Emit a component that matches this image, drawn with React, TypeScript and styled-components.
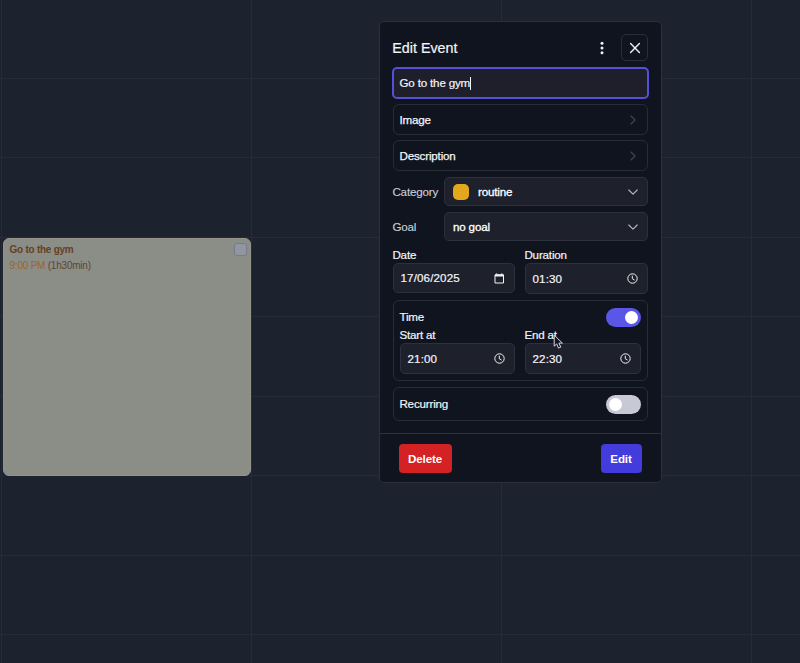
import React from "react";
import styled, { createGlobalStyle, css } from "styled-components";

const GlobalStyle = createGlobalStyle`
  * { box-sizing: border-box; }
  body { margin: 0; background: #1c222e; overflow: hidden; }
`;

const Page = styled.main`
  position: relative;
  width: 800px;
  height: 663px;
  overflow: hidden;
  background: #1c222e;
  color: #f3f4f8;
  font: 11.6px/14px "Liberation Sans", Arial, sans-serif;
  letter-spacing: -0.17px;
`;

const Calendar = styled.div`
  display: grid;
  width: 1002px;
  grid-template-columns: 2px repeat(4, 250px);
  grid-template-rows: 79px 79px 80px 79px 80px 79px 80px 79px 79px;
`;

const Slot = styled.div`
  border-right: 1px solid #252b38;
  border-bottom: 1px solid #252b38;
`;

const EventCard = styled.article`
  position: absolute;
  left: 3px;
  top: 238px;
  width: 248px;
  height: 238px;
  padding: 4px 4px 0 5.5px;
  border: 1px solid #96938a;
  border-radius: 6px;
  background: #8b8d87;
  color: #65401f;
  font-size: 10px;
  line-height: 16px;
`;

const CardHead = styled.div`
  display: flex;
  justify-content: space-between;
  height: 14px;
  line-height: 13px;
  letter-spacing: -0.25px;
`;

const CheckBox = styled.span`
  width: 13px;
  height: 13px;
  margin-right: -1px;
  border: 1px solid #777b91;
  border-radius: 3px;
  background: #9296a1;
`;

const EventTime = styled.div`
  padding-top: 1px;
  color: #5c4632;
  letter-spacing: -0.22px;
  span { color: #9c671f; }
`;

const Dialog = styled.section`
  position: absolute;
  left: 379px;
  top: 21px;
  width: 283px;
  height: 462px;
  display: flex;
  flex-direction: column;
  border: 1px solid #2a303c;
  border-radius: 5px;
  background: #0f141f;
`;

const DialogBody = styled.div`
  display: flex;
  flex-direction: column;
  gap: 6px;
  height: 412px;
  padding: 12px 13px 0;
  border-bottom: 1px solid #2a303c;
`;

const Header = styled.header`
  display: flex;
  align-items: center;
  height: 28px;
`;

const Title = styled.h1`
  flex: 1;
  margin: -1px 0 0 -0.7px;
  font-size: 14.3px;
  font-weight: 400;
  line-height: 20px;
  letter-spacing: 0;
  -webkit-text-stroke: 0.2px currentColor;
`;

const IconButton = styled.button<{ $framed?: boolean }>`
  display: grid;
  place-items: center;
  width: ${(p) => (p.$framed ? 27 : 26)}px;
  height: ${(p) => (p.$framed ? 27 : 28)}px;
  margin: ${(p) => (p.$framed ? "-1px 0 0 0" : "0 6px 0 0")};
  padding: 0;
  border: ${(p) => (p.$framed ? "1px solid #2a2f3b" : "0")};
  border-radius: 5px;
  background: transparent;
  color: #f0f1f6;
`;

const NameField = styled.div`
  display: flex;
  align-items: center;
  height: 32px;
  margin: -1px -1px 0;
  padding-left: 5.5px;
  border: 2px solid #5550d8;
  border-radius: 5px;
  background: #1e1f2a;
  -webkit-text-stroke: 0.2px currentColor;
`;

const Caret = styled.span`
  width: 1px;
  height: 13px;
  background: #f3f4f8;
`;

const panel = css`
  border: 1px solid #272c37;
  border-radius: 6px;
`;

const ExpandRow = styled.div`
  ${panel}
  display: flex;
  align-items: center;
  justify-content: space-between;
  height: 31px;
  margin-top: -1px;
  padding: 0 9px 0 5.5px;
  -webkit-text-stroke: 0.25px currentColor;
  svg { color: #3f444f; }
`;

const SelectRow = styled.div`
  display: grid;
  grid-template-columns: 51px 204px;
  align-items: center;
  height: 29px;
  color: #c9cdd8;
`;

const SelectLabel = styled.span`
  margin-left: -0.6px;
  -webkit-text-stroke: 0.15px currentColor;
`;

const Select = styled.div`
  ${panel}
  display: flex;
  align-items: center;
  height: 29px;
  padding: 0 9px 0 8px;
  border-color: #2c313d;
  border-radius: 5px;
  background: #1e202b;
  color: #fff;
  -webkit-text-stroke: 0.3px currentColor;
  svg { margin-left: auto; color: #b3b6bf; }
`;

const Swatch = styled.span`
  width: 16px;
  height: 16px;
  margin-right: 9px;
  border-radius: 5px;
  background: #e3a61c;
`;

const Pair = styled.div<{ $inner?: boolean }>`
  display: grid;
  grid-template-columns: ${(p) => (p.$inner ? "115px 116px" : "122px 123px")};
  column-gap: 10px;
  align-items: start;
  margin-top: 1px;
`;

const Field = styled.label`
  display: flex;
  flex-direction: column;
  gap: 1px;
  -webkit-text-stroke: 0.2px currentColor;
`;

const FieldName = styled.span`
  margin-left: -0.6px;
`;

const Input = styled.div<{ $short?: boolean }>`
  ${panel}
  display: flex;
  align-items: center;
  justify-content: space-between;
  height: ${(p) => (p.$short ? 30 : 31)}px;
  padding: 0 9px 0 6.5px;
  border-color: #2c313d;
  border-radius: 5px;
  background: #1e202b;
  letter-spacing: 0.13px;
`;

const TimePanel = styled.div`
  ${panel}
  height: 81px;
  padding: 6px;
`;

const ToggleRow = styled.div`
  display: flex;
  align-items: center;
  justify-content: space-between;
  height: 20px;
  -webkit-text-stroke: 0.2px currentColor;
`;

const RecurringPanel = styled.div`
  ${panel}
  height: 34px;
  padding: 6px;
`;

const Toggle = styled.span<{ $on?: boolean }>`
  display: flex;
  align-items: center;
  justify-content: ${(p) => (p.$on ? "flex-end" : "flex-start")};
  width: 35px;
  height: 19px;
  padding: 0 3px;
  border-radius: 10px;
  background: ${(p) => (p.$on ? "#5956e8" : "#c8c9d5")};
`;

const Knob = styled.span`
  width: 13px;
  height: 13px;
  border-radius: 50%;
  background: #fff;
`;

const Footer = styled.footer`
  display: flex;
  justify-content: space-between;
  align-items: center;
  height: 48px;
  padding: 0 19px;
`;

const Action = styled.button<{ $danger?: boolean }>`
  width: ${(p) => (p.$danger ? 53 : 41)}px;
  height: 29px;
  padding: 0 1px 0 0;
  border: 0;
  border-radius: 4px;
  background: ${(p) => (p.$danger ? "#d42123" : "#443bdc")};
  color: #fff;
  font: bold 11.6px "Liberation Sans", Arial, sans-serif;
  letter-spacing: -0.15px;
`;

const Pointer = styled.svg`
  position: absolute;
  left: 552px;
  top: 334px;
`;

const Chevron = ({ down }: { down?: boolean }) => (
  <svg width="10" height="10" viewBox="0 0 10 10" fill="none" stroke="currentColor" strokeWidth="1.15" strokeLinecap="round" strokeLinejoin="round">
    <path d={down ? "M.8 3 5 7.1 9.2 3" : "m3 1 4 4-4 4"} />
  </svg>
);

const Clock = () => (
  <svg width="11" height="11" viewBox="0 0 11 11" fill="none" stroke="currentColor" strokeWidth="1">
    <circle cx="5.5" cy="5.5" r="4.7" />
    <path d="M5.3 2.7v3l2.3 1.4" />
  </svg>
);

const CalendarIcon = () => (
  <svg width="11" height="11" viewBox="0 0 11 11" fill="none" stroke="currentColor">
    <path d="M1 1.8h8.5V10H1z" />
    <path d="M1 2.5h8.5" strokeWidth="2" />
    <path d="M2.7.3v1M7.8.3v1" />
  </svg>
);

const TimeInput = ({ label, value }: { label: string; value: string }) => (
  <Field>
    <FieldName>{label}</FieldName>
    <Input>{value}<Clock /></Input>
  </Field>
);

export default function App() {
  return (
    <Page>
      <GlobalStyle />
      <Calendar>
        {Array.from({ length: 45 }, (_, i) => <Slot key={i} />)}
      </Calendar>
      <EventCard>
        <CardHead><b>Go to the gym</b><CheckBox /></CardHead>
        <EventTime><span>9:00 PM</span> (1h30min)</EventTime>
      </EventCard>
      <Dialog>
        <DialogBody>
          <Header>
            <Title>Edit Event</Title>
            <IconButton aria-label="More options">
              <svg width="4" height="14" viewBox="0 0 4 14" fill="currentColor">
                <circle cx="2" cy="2.3" r="1.5" />
                <circle cx="2" cy="7" r="1.5" />
                <circle cx="2" cy="11.7" r="1.5" />
              </svg>
            </IconButton>
            <IconButton $framed aria-label="Close">
              <svg width="12" height="12" viewBox="0 0 12 12" stroke="currentColor" strokeWidth="1.4" strokeLinecap="round">
                <path d="m1.6 1.6 8.8 8.8m0-8.8-8.8 8.8" />
              </svg>
            </IconButton>
          </Header>
          <NameField>Go to the gym<Caret /></NameField>
          <ExpandRow>Image<Chevron /></ExpandRow>
          <ExpandRow>Description<Chevron /></ExpandRow>
          <SelectRow>
            <SelectLabel>Category</SelectLabel>
            <Select><Swatch />routine<Chevron down /></Select>
          </SelectRow>
          <SelectRow>
            <SelectLabel>Goal</SelectLabel>
            <Select>no goal<Chevron down /></Select>
          </SelectRow>
          <Pair>
            <Field>
              <FieldName>Date</FieldName>
              <Input $short>17/06/2025<CalendarIcon /></Input>
            </Field>
            <TimeInput label="Duration" value="01:30" />
          </Pair>
          <TimePanel>
            <ToggleRow><FieldName>Time</FieldName><Toggle $on><Knob /></Toggle></ToggleRow>
            <Pair $inner>
              <TimeInput label="Start at" value="21:00" />
              <TimeInput label="End at" value="22:30" />
            </Pair>
          </TimePanel>
          <RecurringPanel>
            <ToggleRow><FieldName>Recurring</FieldName><Toggle><Knob /></Toggle></ToggleRow>
          </RecurringPanel>
        </DialogBody>
        <Footer>
          <Action $danger>Delete</Action>
          <Action>Edit</Action>
        </Footer>
      </Dialog>
      <Pointer width="12" height="17" viewBox="0 0 12 17">
        <path d="M2.2 1.2v11l2.5-2.3 1.8 4.2 2.3-1-1.9-4h3.5z" fill="#151823" stroke="#d4d6dd" strokeWidth="1" />
      </Pointer>
    </Page>
  );
}
